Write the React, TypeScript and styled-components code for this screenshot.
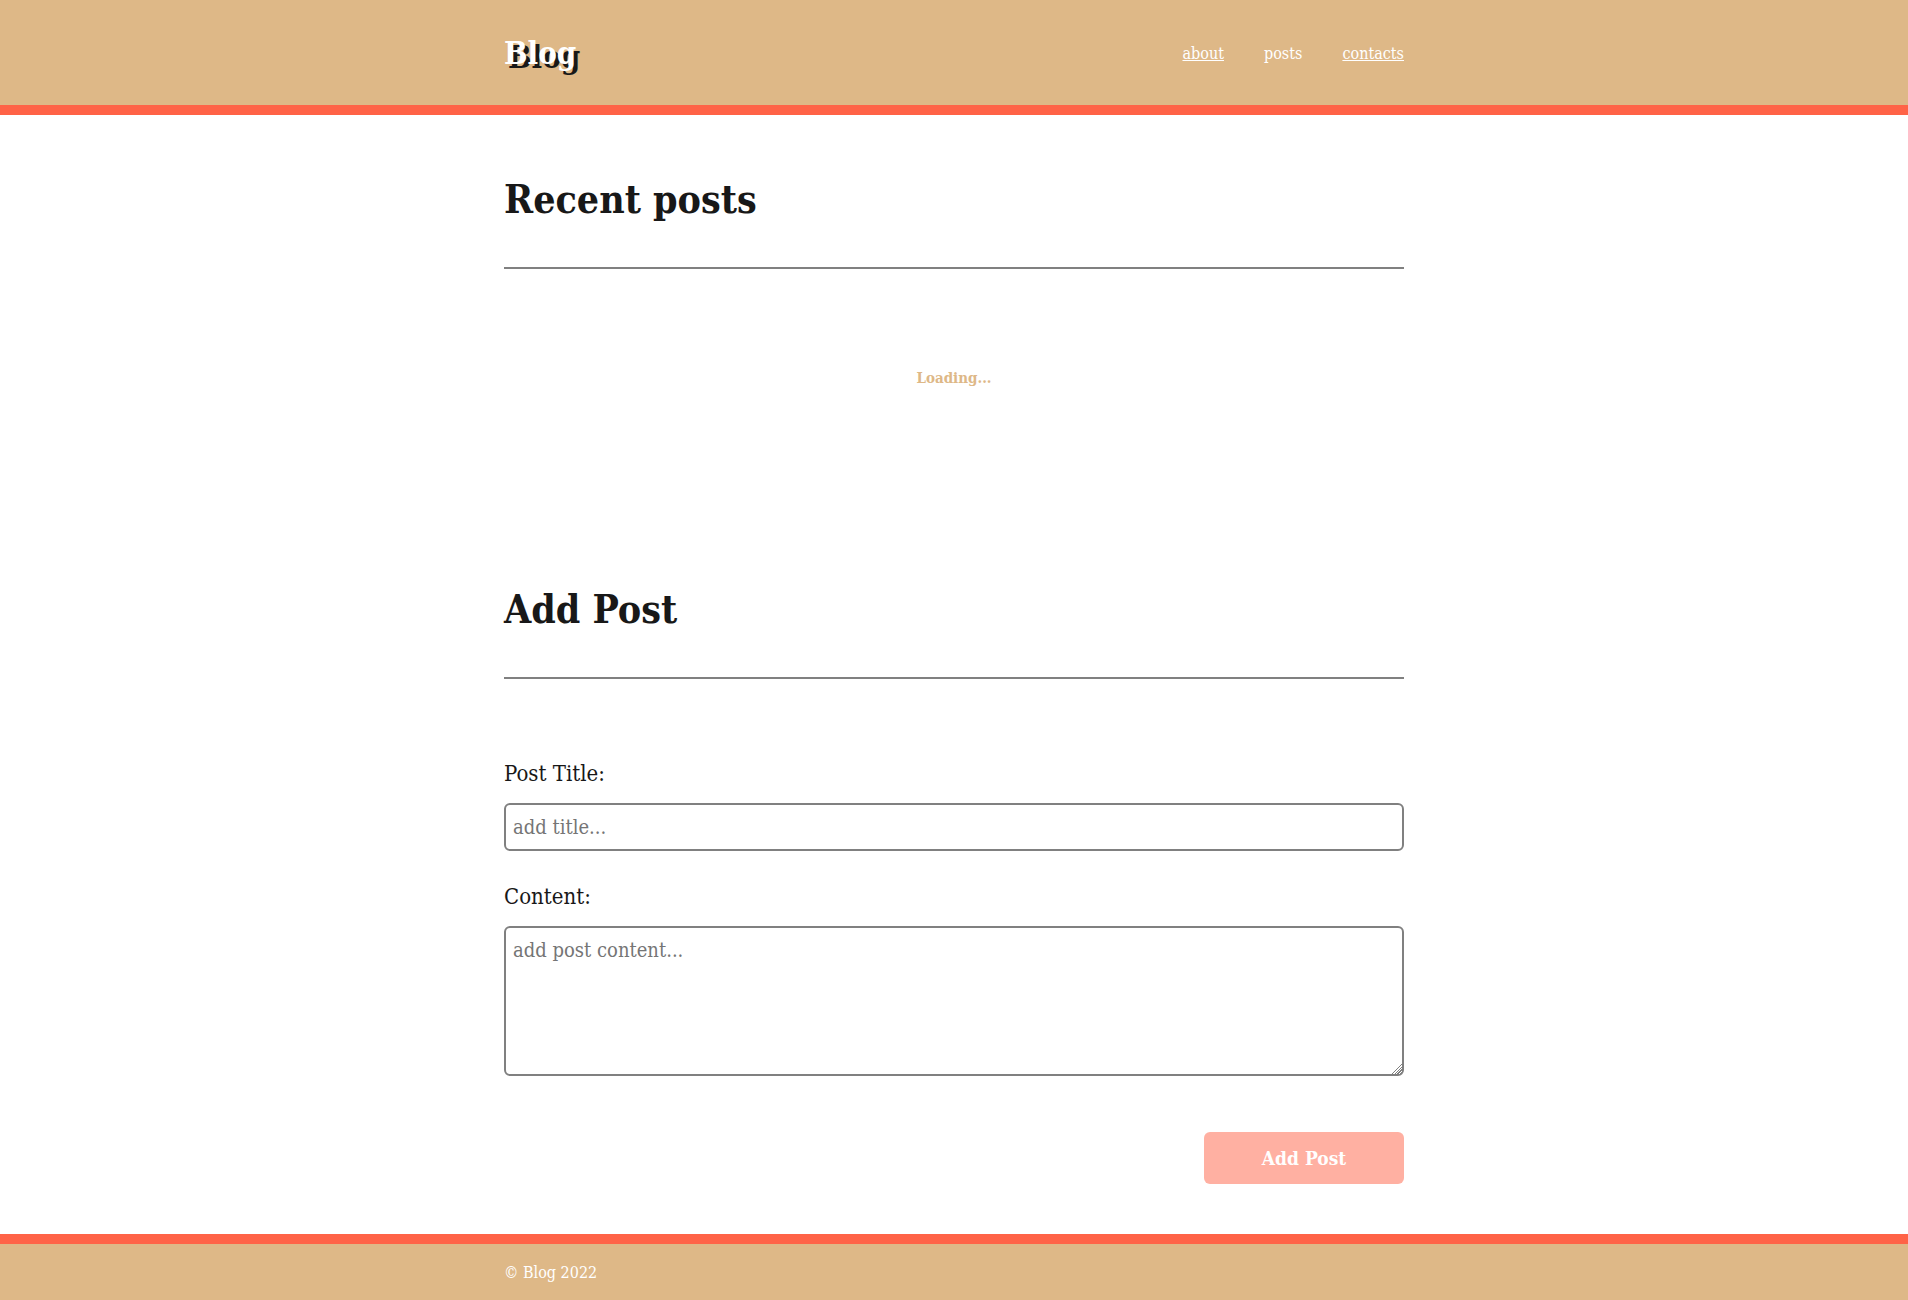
import React, { useState } from "react";
import styled, { createGlobalStyle } from "styled-components";

const colors = {
  sand: "#deb887",
  tomato: "#ff6347",
  ink: "#181818",
  gray: "#808080",
  white: "#ffffff",
};

const GlobalStyle = createGlobalStyle`
  *, *::before, *::after { box-sizing: border-box; }
  body {
    margin: 0;
    background: ${colors.white};
    color: ${colors.ink};
    font-family: "Roboto Slab", "DejaVu Serif Condensed", "DejaVu Serif", serif;
    font-size: 16px;
    line-height: 21px;
  }
`;

const Page = styled.div`
  display: flex;
  flex-direction: column;
  min-height: 100vh;
`;

const Container = styled.div`
  width: 100%;
  max-width: 900px;
  margin: 0 auto;
`;

const Header = styled.header`
  padding: 31px 0 29px;
  background: ${colors.sand};
  border-bottom: 10px solid ${colors.tomato};
  color: ${colors.white};
`;

const HeaderRow = styled(Container)`
  display: flex;
  align-items: center;
  justify-content: space-between;
`;

const Logo = styled.div`
  font-size: 31px;
  line-height: 45px;
  font-weight: 700;
  text-shadow: 4px 4px 0 ${colors.ink};
`;

const Nav = styled.nav`
  display: flex;
  gap: 40px;
`;

const NavLink = styled.a<{ $active?: boolean }>`
  color: inherit;
  text-decoration: ${(p) => (p.$active ? "none" : "underline")};
`;

const Main = styled.main`
  flex: 1;
  padding: 57px 0 50px;
`;

const Title = styled.h1`
  margin: 0;
  padding-bottom: 40px;
  border-bottom: 2px solid ${colors.gray};
  font-size: 39px;
  line-height: 55px;
  font-weight: 700;
`;

const Loading = styled.p`
  margin: 0;
  padding: 99px 0 193px;
  color: ${colors.sand};
  font-size: 15px;
  font-weight: 700;
  text-align: center;
`;

const Form = styled.form`
  display: flex;
  flex-direction: column;
  gap: 31px;
  padding-top: 80px;
`;

const Field = styled.div`
  display: flex;
  flex-direction: column;
  gap: 15px;
`;

const Label = styled.label`
  font-size: 22px;
  line-height: 29px;
`;

const Input = styled.input`
  width: 100%;
  padding: 9px 7px;
  border: 2px solid ${colors.gray};
  border-radius: 6px;
  background: ${colors.white};
  color: ${colors.ink};
  font-family: inherit;
  font-size: 20px;
  line-height: 26px;

  &::placeholder { color: #757575; }
`;

const TextArea = styled(Input).attrs({ as: "textarea" })`
  display: block;
  height: 150px;
  resize: both;

  &::-webkit-resizer {
    background:
      linear-gradient(135deg, ${colors.white} 50%, transparent 50%) right bottom / 11px 11px no-repeat,
      repeating-linear-gradient(135deg, ${colors.gray} 0 1px, ${colors.white} 1px 2px) right bottom / 11px 11px no-repeat;
  }
`;

const Submit = styled.button`
  align-self: flex-end;
  width: 200px;
  margin-top: 25px;
  padding: 13px;
  border: 0;
  border-radius: 6px;
  background: ${colors.tomato};
  color: ${colors.white};
  font-family: inherit;
  font-size: 19px;
  line-height: 26px;
  font-weight: 700;
  cursor: pointer;

  &:disabled { opacity: 0.5; cursor: default; }
`;

const Footer = styled.footer`
  padding: 17px 0 15px;
  border-top: 10px solid ${colors.tomato};
  background: ${colors.sand};
  color: ${colors.white};
  line-height: 24px;
`;

export default function App() {
  const [title, setTitle] = useState("");
  const [content, setContent] = useState("");

  return (
    <Page>
      <GlobalStyle />
      <Header>
        <HeaderRow>
          <Logo>Blog</Logo>
          <Nav>
            <NavLink href="#about">about</NavLink>
            <NavLink href="#posts" $active>posts</NavLink>
            <NavLink href="#contacts">contacts</NavLink>
          </Nav>
        </HeaderRow>
      </Header>
      <Main>
        <Container>
          <Title>Recent posts</Title>
          <Loading>Loading...</Loading>
          <Title as="h2">Add Post</Title>
          <Form onSubmit={(e) => e.preventDefault()}>
            <Field>
              <Label htmlFor="title">Post Title:</Label>
              <Input
                id="title"
                type="text"
                placeholder="add title..."
                value={title}
                onChange={(e) => setTitle(e.target.value)}
              />
            </Field>
            <Field>
              <Label htmlFor="content">Content:</Label>
              <TextArea
                id="content"
                placeholder="add post content..."
                value={content}
                onChange={(e) => setContent(e.target.value)}
              />
            </Field>
            <Submit type="submit" disabled={!title || !content}>Add Post</Submit>
          </Form>
        </Container>
      </Main>
      <Footer>
        <Container>© Blog 2022</Container>
      </Footer>
    </Page>
  );
}
